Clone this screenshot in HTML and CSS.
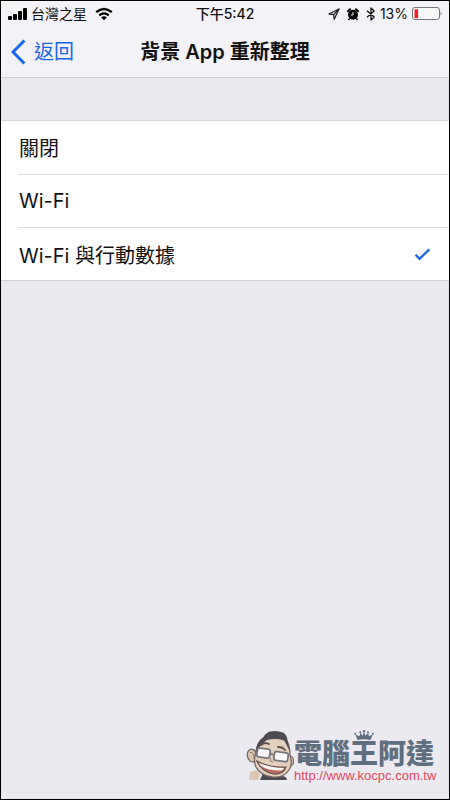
FILE: index.html
```html
<!DOCTYPE html>
<html lang="zh-Hant">
<head>
<meta charset="utf-8">
<meta name="viewport" content="width=device-width, initial-scale=1">
<title>背景 App 重新整理</title>
<link rel="stylesheet" href="styles.css">
</head>
<body>
<header class="top">
  <div class="status">
    <div class="status-left">
      <svg class="signal" width="20" height="12" viewBox="0 0 20 12" aria-hidden="true"><rect x="0" y="8" width="4" height="4" rx="1"/><rect x="5" y="6" width="4" height="6" rx="1"/><rect x="10" y="3" width="4" height="9" rx="1"/><rect x="15" y="0" width="4" height="12" rx="1"/></svg>
      <span>台灣之星</span>
      <svg class="wifi" width="18" height="14" viewBox="0 0 18 14" fill="none" stroke="#000" stroke-width="2.3" aria-hidden="true"><path d="M1.200 5.200Q9-1.200 16.800 5.200M4.200 8.400Q9 4.400 13.800 8.400"/><path d="M6.200 10.400Q9 8 11.800 10.400L9 13.200z" fill="#000" stroke="none"/></svg>
    </div>
    <time class="clock">下午5:42</time>
    <div class="status-right">
      <svg width="12" height="12" viewBox="0 0 12 12" fill="none" stroke="#222" stroke-width="1.3" stroke-linejoin="round" aria-hidden="true"><path d="M11 1L1 6l4.600.6.6 4.600z"/><path d="M11 1L5.600 6.600"/></svg>
      <svg class="alarm" width="12" height="13" viewBox="0 0 12 13" aria-hidden="true"><circle cx="6" cy="6.800" r="5"/><path d="M1 3.200L3 1.200M11 3.200L9 1.200" stroke="#000" stroke-width="2" stroke-linecap="round"/><path d="M2.600 10.500L1.500 12M9.400 10.500l1.100 1.500" stroke="#000" stroke-width="1.400"/><path d="M6 4v3H3.800" fill="none" stroke="#f3f2f7" stroke-width="1"/></svg>
      <svg class="bluetooth" width="10" height="14" viewBox="0 0 10 14" fill="none" stroke="#111" stroke-width="1.3" stroke-linejoin="round" aria-hidden="true"><path d="M1 3.800l7.200 6.200L5 13V1l3.200 3L1 10.200"/></svg>
      <span>13%</span>
      <svg width="30" height="14" viewBox="0 0 30 14" aria-hidden="true"><rect x=".5" y=".5" width="27" height="12" rx="2.500" fill="#faf9fc" stroke="#77767a"/><rect x="2.500" y="2.300" width="3.600" height="9" rx=".8" fill="#f51c24"/><path d="M28.600 4.600q2 2 0 4z" fill="#77767a"/></svg>
    </div>
  </div>
  <nav class="nav">
    <a class="back" href="#"><svg width="15" height="26" viewBox="0 0 15 26" fill="none" stroke="#1766ec" stroke-width="3" aria-hidden="true"><path d="M13.400 1.500L2 13l11.400 11.500"/></svg><span>返回</span></a>
    <h1 class="title">背景 App 重新整理</h1>
  </nav>
</header>
<main class="content">
  <form class="options">
    <label class="option"><input type="radio" name="refresh" value="off"><span class="label">關閉</span></label>
    <label class="option"><input type="radio" name="refresh" value="wifi"><span class="label">Wi-Fi</span></label>
    <label class="option"><input type="radio" name="refresh" value="all" checked><span class="label">Wi-Fi 與行動數據</span><svg class="check" width="17" height="13" viewBox="0 0 17 13" fill="none" stroke="#1c63e6" stroke-width="2.300" aria-hidden="true"><path d="M1.500 6.800l4 4L15.300 1.400"/></svg></label>
  </form>
</main>
<footer class="credit">
  <svg class="face" width="48" height="52" viewBox="0 0 48 52" aria-hidden="true">
    <path d="M14 50l3-7 12 4 8-1q4 1 4 4z" fill="#4d4b51"/>
    <path d="M3 50l1-8 6-2 4 4-2 6z" fill="#dcc7b2"/>
    <ellipse cx="6" cy="25.500" rx="4.600" ry="6.500" transform="rotate(-10 6 25.500)" fill="#dcc7b2" stroke="#75655f" stroke-width="1.300"/>
    <path d="M4 22.500q4-1 4 6" fill="none" stroke="#8d776b"/>
    <ellipse cx="44.500" cy="31" rx="3" ry="5" fill="#dcc7b2" stroke="#75655f" stroke-width="1.200"/>
    <path d="M17 8Q30 5 40 9q4 6 4 16 3 9-1 15-5 8-17 7Q14 45 10 37q-3-7 0-14 1-11 7-15z" fill="#e3d1be" stroke="#75655f" stroke-width="1.300"/>
    <path d="M17 8Q19 3 24 1.500q7-1.500 13 1 4 2 4.500 8l2.500 11q-2-3-3.500-7l-2.500-4q-8-2.500-17-.5l-6 5-5 6q0-8 7-13z" fill="#4d4b51"/>
    <path d="M15 15q4-3 8-1M32 17q5 0 7 3" fill="none" stroke="#5b504c" stroke-width="1.800" stroke-linecap="round"/>
    <g fill="#fbfafc" stroke="#77777c" stroke-width="1.800"><rect x="11" y="18.500" width="13" height="9" rx="2.500" transform="rotate(8 17 23)"/><rect x="28" y="22" width="14" height="9" rx="2.500" transform="rotate(8 34 27)"/><path d="M24 23.500l4 1.500M10 21l-3-1" fill="none"/></g>
    <path d="M25 28q-3 3 2 4" fill="none" stroke="#8b7061"/>
    <path d="M11 31Q24 38 40 37q-3 8-13 7-12-3-16-13z" fill="#bf6961" stroke="#675450" stroke-width="1.200"/>
    <path d="M13 33q12 5 25 5-1 2-3 2.500Q22 40.500 15 36z" fill="#fffafa"/>
  </svg>
  <div class="brand">
    <svg class="crown" width="20" height="11" viewBox="0 0 20 11" fill="#5f6f80" aria-hidden="true"><path d="M3.500 10L1.200 4.300l4.200 2L6.500 2.700l2.300 3L10 1.500l1.500 4.200 2.700-3 .7 3.600 4-2L16.500 10q-6.500-1.300-13 0z"/><circle cx="1.200" cy="3.800" r="1"/><circle cx="6.200" cy="2.200" r="1"/><circle cx="10" cy="1.200" r="1.200"/><circle cx="14" cy="2.200" r="1"/><circle cx="18.800" cy="3.800" r="1"/></svg>
    <strong class="name">電腦王阿達</strong>
    <a class="url" href="#">http://www.kocpc.com.tw</a>
  </div>
</footer>
</body>
</html>
```
FILE: styles.css
```css
* {
  box-sizing: border-box;
}

body {
  display: flex;
  flex-direction: column;
  min-height: 100vh;
  margin: 0;
  border: 1px solid #000;
  background: #ebeaf0;
  color: #111;
  font-family: Inter, "Noto Sans CJK TC", sans-serif;
}

svg {
  display: block;
  flex: none;
}

.top {
  background: #f3f2f7;
  border-bottom: 1px solid #d1d0d6;
}

.status {
  display: grid;
  grid-template-columns: 1fr auto 1fr;
  align-items: center;
  height: 26px;
  padding: 0 7px;
  font-size: 14px;
  line-height: 24px;
}

.status-left,
.status-right {
  display: flex;
  align-items: center;
  gap: 4px;
}

.status-left {
  gap: 3px;
}

.wifi {
  margin-left: 5px;
}

.status-right {
  justify-content: flex-end;
}

.alarm,
.bluetooth {
  margin-left: 3px;
}

.clock {
  font-weight: 500;
}

.nav {
  display: grid;
  grid-template-columns: 1fr auto 1fr;
  align-items: center;
  height: 50px;
  padding: 0 10px;
}

.back {
  display: flex;
  align-items: center;
  gap: 8px;
  color: #1766ec;
  font-size: 20px;
  line-height: 28px;
  text-decoration: none;
}

.title {
  margin: 0;
  font-size: 20px;
  line-height: 28px;
  font-weight: 600;
}

.content {
  flex: 1;
  padding-top: 42px;
}

.options {
  border-top: 1px solid #d9d8de;
  border-bottom: 1px solid #d1d0d6;
  background: #fff;
}

.option {
  display: flex;
  align-items: center;
  height: 53px;
  margin-left: 17px;
  padding: 0 18px 0 1px;
  font-size: 20px;
}

.option + .option {
  border-top: 1px solid #dedde1;
}

.option input {
  position: absolute;
  opacity: 0;
}

.label {
  flex: 1;
}

.credit {
  display: flex;
  justify-content: flex-end;
  align-items: flex-start;
  padding: 0 15px 16px 0;
}

.brand {
  display: flex;
  flex-direction: column;
  width: 140px;
}

.crown {
  align-self: center;
}

.name {
  color: #5f6f80;
  font-size: 28px;
  line-height: 26px;
  font-weight: 900;
}

.url {
  margin-top: 2px;
  color: #e2485c;
  font: 13px/14px "Liberation Sans", sans-serif;
  text-decoration: none;
}
```
